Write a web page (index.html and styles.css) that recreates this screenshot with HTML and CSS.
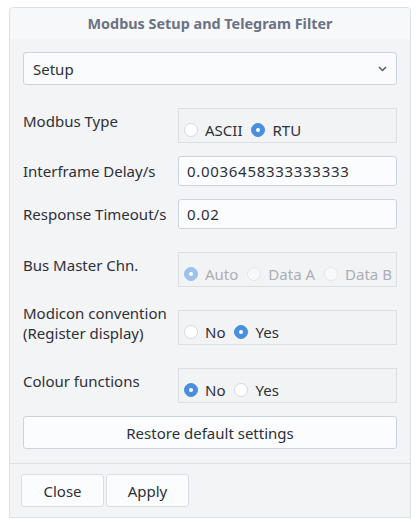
FILE: index.html
```html
<!DOCTYPE html>
<html>
<head>
    <title>Modbus Setup and Telegram Filter</title>
    <link rel="stylesheet" href="styles.css">
</head>
<body>
    <div class="panel">
        <div class="panel-title">Modbus Setup and Telegram Filter</div>
        <div class="panel-body">
            <div class="select">
                <span>Setup</span>
                <svg class="chevron" width="9" height="6" viewBox="0 0 9 6"><path d="M1 1 L4.5 4.5 L8 1" fill="none" stroke="#555a66" stroke-width="1.5"/></svg>
            </div>

            <div class="row row-group">
                <label>Modbus Type</label>
                <div class="group">
                    <span class="radio"></span><span class="opt">ASCII</span>
                    <span class="radio checked"></span><span class="opt">RTU</span>
                </div>
            </div>
            <div class="row">
                <label>Interframe Delay/s</label>
                <div class="input">0.0036458333333333</div>
            </div>
            <div class="row">
                <label>Response Timeout/s</label>
                <div class="input">0.02</div>
            </div>
            <div class="row row-group">
                <label>Bus Master Chn.</label>
                <div class="group disabled">
                    <span class="radio checked"></span><span class="opt">Auto</span>
                    <span class="radio"></span><span class="opt">Data A</span>
                    <span class="radio"></span><span class="opt">Data B</span>
                </div>
            </div>
            <div class="row row-group">
                <label>Modicon convention<br>(Register display)</label>
                <div class="group">
                    <span class="radio"></span><span class="opt">No</span>
                    <span class="radio checked"></span><span class="opt">Yes</span>
                </div>
            </div>
            <div class="row row-group">
                <label>Colour functions</label>
                <div class="group">
                    <span class="radio checked"></span><span class="opt">No</span>
                    <span class="radio"></span><span class="opt">Yes</span>
                </div>
            </div>

            <button class="btn btn-wide">Restore default settings</button>
        </div>
        <div class="panel-footer">
            <button class="btn">Close</button>
            <button class="btn">Apply</button>
        </div>
    </div>
</body>
</html>
```

FILE: styles.css
```css
body {
    margin: 0;
    padding: 7px 9px 0 9px;
    background: #ffffff;
    font-family: "Noto Sans", sans-serif;
    font-size: 15px;
    color: #2d3038;
}
.panel {
    width: 400px;
    border: 1px solid #dfe0e3;
    border-radius: 4px 4px 0 0;
    background: #f3f4f6;
}
.panel-title {
    height: 31px;
    line-height: 31px;
    text-align: center;
    font-size: 14.4px;
    font-weight: bold;
    color: #6b7283;
    background: #f7f8f9;
    border-radius: 4px 4px 0 0;
}
.panel-body {
    padding: 13px 13px 14px 13px;
    display: flex;
    flex-direction: column;
    gap: 13px;
    border-bottom: 1px solid #dfe0e3;
}
.select {
    height: 31px;
    border: 1px solid #cbd3e3;
    border-radius: 3px;
    background: #fafbfc;
    display: flex;
    align-items: center;
    justify-content: space-between;
    padding: 0 9px 0 9px;
}
.row {
    display: grid;
    grid-template-columns: 155px 1fr;
    align-items: center;
}
.row label {
    line-height: 20px;
}
.row-group {
    height: 45px;
}
.row-group .group {
    align-self: end;
}
.input {
    height: 28px;
    line-height: 28px;
    border: 1px solid #cbd3e3;
    border-radius: 3px;
    background: #fbfcfd;
    padding: 0 8px;
    letter-spacing: 0.7px;
}
.group {
    border: 1px solid #dcdee2;
    background: #f2f3f5;
    display: flex;
    align-items: center;
    padding: 8px 0 0 5px;
    box-sizing: border-box;
    height: 35px;
    white-space: nowrap;
    overflow: hidden;
}
.radio {
    width: 12px;
    height: 12px;
    border: 1px solid #d5d9e0;
    border-radius: 50%;
    background: #ffffff;
    margin-right: 7px;
    flex: none;
}
.radio.checked {
    background: #4a8fdf;
    border-color: #4a8fdf;
    position: relative;
}
.radio.checked::after {
    content: "";
    position: absolute;
    left: 4px;
    top: 4px;
    width: 4px;
    height: 4px;
    border-radius: 50%;
    background: #ffffff;
}
.opt {
    margin-right: 9px;
    flex: none;
}
.disabled .opt {
    color: #abaeb5;
}
.disabled .radio {
    border-color: #e4e6ea;
    background: #f8f9fa;
}
.disabled .radio.checked {
    background: #9cc1ec;
    border-color: #9cc1ec;
}
.btn {
    font-family: inherit;
    font-size: 15px;
    color: #2d3038;
    background: #fbfcfd;
    border: 1px solid #cbd3e3;
    border-radius: 3px;
    height: 33px;
    cursor: pointer;
}
.btn-wide {
    width: 100%;
}
.panel-footer {
    padding: 10px 11px;
    display: flex;
    gap: 2px;
}
.panel-footer .btn {
    width: 83px;
    border-color: #d8dde8;
}
```
